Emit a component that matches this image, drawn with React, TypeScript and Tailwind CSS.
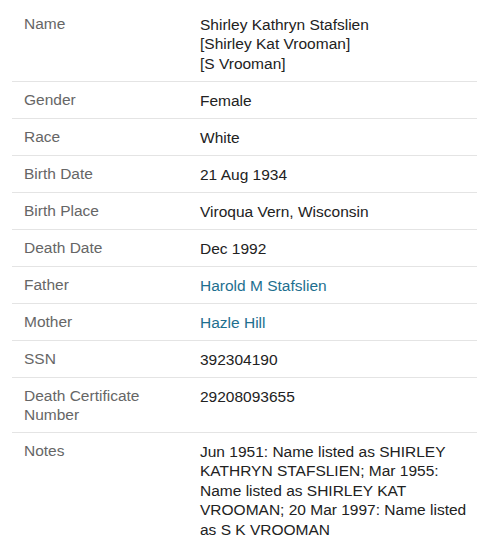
import React from "react";

type Row = { label: string; value: React.ReactNode; link?: boolean };

const rows: Row[] = [
  {
    label: "Name",
    value: (
      <>
        Shirley Kathryn Stafslien
        <br />
        [Shirley Kat Vrooman]
        <br />
        [S Vrooman]
      </>
    ),
  },
  { label: "Gender", value: "Female" },
  { label: "Race", value: "White" },
  { label: "Birth Date", value: "21 Aug 1934" },
  { label: "Birth Place", value: "Viroqua Vern, Wisconsin" },
  { label: "Death Date", value: "Dec 1992" },
  { label: "Father", value: "Harold M Stafslien", link: true },
  { label: "Mother", value: "Hazle Hill", link: true },
  { label: "SSN", value: "392304190" },
  { label: "Death Certificate Number", value: "29208093655" },
  {
    label: "Notes",
    value:
      "Jun 1951: Name listed as SHIRLEY KATHRYN STAFSLIEN; Mar 1955: Name listed as SHIRLEY KAT VROOMAN; 20 Mar 1997: Name listed as S K VROOMAN",
  },
];

export default function App() {
  return (
    <div
      className="w-[495px] h-[540px] overflow-hidden bg-white pt-[6px] px-[12px]"
      style={{ fontFamily: '"Liberation Sans", Arial, sans-serif' }}
    >
      <div className="w-[465px]">
        {rows.map((r, i) => (
          <div
            key={r.label}
            className={`flex pt-[8.5px] pb-[8px] pl-[12px] ${
              i > 0 ? "border-t border-[#e4e4e4]" : ""
            }`}
          >
            <div className="w-[176px] shrink-0 pr-[8px] text-[15.5px] leading-[18.5px] text-[#666666] pt-[0.5px]">
              {r.label}
            </div>
            <div
              className={`flex-1 mr-[-6px] text-[15.5px] leading-[19.5px] ${
                r.link ? "text-[#1e6f8f]" : "text-[#222222]"
              }`}
            >
              {r.value}
            </div>
          </div>
        ))}
      </div>
    </div>
  );
}
